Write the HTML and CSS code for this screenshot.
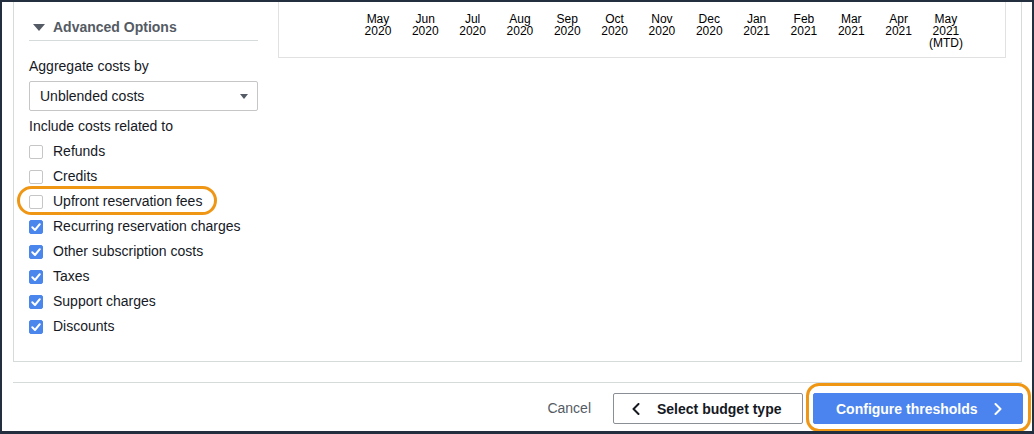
FILE: index.html
```html
<!DOCTYPE html>
<html lang="en">
<head>
<meta charset="utf-8">
<title>Budget scope</title>
<link rel="stylesheet" href="styles.css">
</head>
<body>
<div class="frame">
  <div class="panel">
    <div class="options">
      <div class="adv-head"><span class="caret"></span>Advanced Options</div>
      <div class="field-label">Aggregate costs by</div>
      <div class="select">Unblended costs<span class="select-arrow"></span></div>
      <div class="field-label include">Include costs related to</div>
      <ul class="checks">
        <li class="check"><span class="box"></span>Refunds</li>
        <li class="check"><span class="box"></span>Credits</li>
        <li class="check marked"><span class="box"></span>Upfront reservation fees<span class="ring"></span></li>
        <li class="check on"><span class="box"><svg viewBox="0 0 14 14" width="14" height="14"><path d="M3.3 7.3 L6 10 L10.8 4.2" /></svg></span>Recurring reservation charges</li>
        <li class="check on"><span class="box"><svg viewBox="0 0 14 14" width="14" height="14"><path d="M3.3 7.3 L6 10 L10.8 4.2" /></svg></span>Other subscription costs</li>
        <li class="check on"><span class="box"><svg viewBox="0 0 14 14" width="14" height="14"><path d="M3.3 7.3 L6 10 L10.8 4.2" /></svg></span>Taxes</li>
        <li class="check on"><span class="box"><svg viewBox="0 0 14 14" width="14" height="14"><path d="M3.3 7.3 L6 10 L10.8 4.2" /></svg></span>Support charges</li>
        <li class="check on"><span class="box"><svg viewBox="0 0 14 14" width="14" height="14"><path d="M3.3 7.3 L6 10 L10.8 4.2" /></svg></span>Discounts</li>
      </ul>
    </div>
    <div class="chart">
      <div class="axis">
        <div class="tick">May<br>2020</div>
        <div class="tick">Jun<br>2020</div>
        <div class="tick">Jul<br>2020</div>
        <div class="tick">Aug<br>2020</div>
        <div class="tick">Sep<br>2020</div>
        <div class="tick">Oct<br>2020</div>
        <div class="tick">Nov<br>2020</div>
        <div class="tick">Dec<br>2020</div>
        <div class="tick">Jan<br>2021</div>
        <div class="tick">Feb<br>2021</div>
        <div class="tick">Mar<br>2021</div>
        <div class="tick">Apr<br>2021</div>
        <div class="tick">May<br>2021<br>(MTD)</div>
      </div>
    </div>
  </div>
  <div class="divider"></div>
  <div class="actions">
    <button class="link-btn">Cancel</button>
    <button class="btn secondary"><svg class="chev" viewBox="0 0 8 12" width="8" height="12"><path d="M6.5 1 L1.5 6 L6.5 11" /></svg>Select budget type</button>
    <div class="ring-wrap">
      <button class="btn primary">Configure thresholds<svg class="chev" viewBox="0 0 8 12" width="8" height="12"><path d="M1.5 1 L6.5 6 L1.5 11" /></svg></button>
      <span class="ring big"></span>
    </div>
  </div>
</div>
</body>
</html>
```

FILE: styles.css
```css
html, body {
  margin: 0;
  padding: 0;
  background: #232f3e;
}

body {
  font-family: "Liberation Sans", Arial, sans-serif;
  font-size: 14px;
  color: #16191f;
}

.frame {
  width: 1034px;
  height: 434px;
  box-sizing: border-box;
  border: 2px solid #232f3e;
  border-bottom-width: 3px;
  background: #fff;
  display: flex;
  flex-direction: column;
  overflow: hidden;
}

.panel {
  height: 360px;
  box-sizing: border-box;
  margin: 0 10px 0 11px;
  border: 1px solid #d5dbdb;
  border-top: none;
  padding: 0 15px;
  display: flex;
  gap: 20px;
  flex-shrink: 0;
}

.options {
  width: 229px;
  flex-shrink: 0;
  padding-top: 15px;
  display: flex;
  flex-direction: column;
}

.adv-head {
  display: flex;
  align-items: center;
  font-weight: bold;
  color: #545b64;
  line-height: 20px;
  padding-bottom: 3px;
  border-bottom: 1px solid #d5dbdb;
}

.caret {
  width: 0;
  height: 0;
  border-left: 6.5px solid transparent;
  border-right: 6.5px solid transparent;
  border-top: 7px solid #545b64;
  margin: 0 8px 0 4px;
}

.field-label {
  line-height: 20px;
  margin-top: 15px;
}

.field-label.include {
  margin-top: 5px;
}

.select {
  margin-top: 5px;
  height: 30px;
  box-sizing: border-box;
  border: 1px solid #c6c6c6;
  border-radius: 2px;
  padding: 0 9px 0 10px;
  display: flex;
  align-items: center;
  justify-content: space-between;
}

.select-arrow {
  width: 0;
  height: 0;
  border-left: 4.5px solid transparent;
  border-right: 4.5px solid transparent;
  border-top: 5px solid #545b64;
}

.checks {
  list-style: none;
  margin: 3px 0 0;
  padding: 0;
}

.check {
  position: relative;
  height: 25px;
  display: flex;
  align-items: center;
  line-height: 25px;
}

.box {
  width: 14px;
  height: 14px;
  box-sizing: border-box;
  border: 1px solid #c6c6c6;
  border-radius: 2px;
  margin-right: 10px;
  flex-shrink: 0;
  display: flex;
}

.check.on .box {
  background: #4b86ec;
  border-color: #4b86ec;
}

.box svg {
  margin: -1px;
}

.box path {
  fill: none;
  stroke: #fff;
  stroke-width: 2;
  stroke-linecap: round;
  stroke-linejoin: round;
}

.ring {
  position: absolute;
  border: 3px solid #ef9614;
  border-radius: 15px;
  pointer-events: none;
}

.check .ring {
  left: -12px;
  top: -3px;
  width: 194px;
  height: 23px;
}

.chart {
  flex: 1;
  align-self: flex-start;
  height: 56px;
  box-sizing: border-box;
  border: 1px solid #e1e1e1;
  border-top: none;
  padding: 11px 0 0 75.3px;
}

.axis {
  display: grid;
  grid-template-columns: repeat(13, 47.33px);
  font-size: 12px;
  line-height: 12px;
  color: #000;
}

.tick {
  text-align: center;
}

.divider {
  margin: 20px 10px 0 11px;
  border-top: 1px solid #d5dbdb;
}

.actions {
  display: flex;
  justify-content: flex-end;
  align-items: center;
  padding: 10px 9px 0 0;
}

button {
  font-family: inherit;
  font-size: 14px;
  cursor: pointer;
}

.link-btn {
  background: none;
  border: none;
  color: #545b64;
  padding: 0;
  margin-right: 22px;
  line-height: 31px;
}

.btn {
  height: 31px;
  box-sizing: border-box;
  border-radius: 2px;
  font-weight: bold;
  display: flex;
  align-items: center;
}

.chev path {
  fill: none;
  stroke-width: 2;
  stroke-linecap: round;
  stroke-linejoin: round;
}

.secondary {
  background: #fff;
  border: 1px solid #8a8f96;
  color: #16191f;
  padding: 0 19px 0 18px;
  gap: 17px;
  width: 190px;
}

.secondary .chev path {
  stroke: #16191f;
}

.ring-wrap {
  position: relative;
  margin-left: 10px;
  display: flex;
}

.primary {
  background: #4b84ee;
  border: 1px solid #4b84ee;
  color: #fff;
  padding: 0 18px 0 22px;
  gap: 16px;
  width: 210px;
}

.primary .chev path {
  stroke: #fff;
}

.ring.big {
  top: -10px;
  bottom: -8px;
  left: -7px;
  right: -8px;
  border-radius: 13px;
}
```
